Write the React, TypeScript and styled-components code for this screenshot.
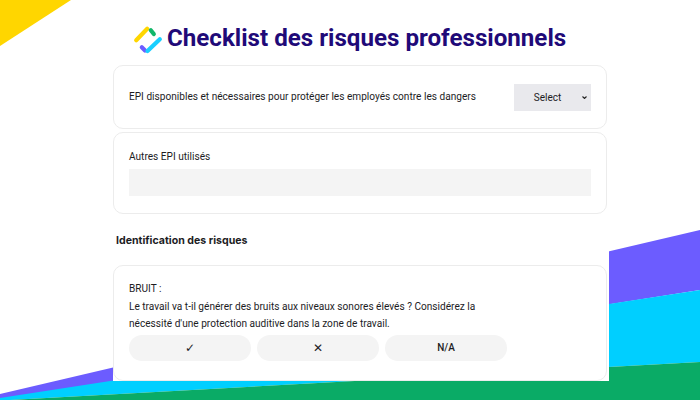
import React from 'react';
import styled, { createGlobalStyle } from 'styled-components';

const GlobalStyle = createGlobalStyle`
  html, body {
    margin: 0;
    padding: 0;
    background: #fff;
    overflow: hidden;
  }
`;

const Page = styled.div`
  position: relative;
  width: 700px;
  height: 400px;
  overflow: hidden;
  font-family: Roboto, Arial, sans-serif;
  color: #1d1d1f;
`;

const Backdrop = styled.svg`
  position: absolute;
  inset: 0;
`;

const Panel = styled.main`
  position: relative;
  box-sizing: border-box;
  width: 496px;
  height: 381px;
  margin-left: 113px;
  padding-right: 2px;
  background: #fff;
  overflow: hidden;
`;

const Header = styled.header`
  display: flex;
  align-items: center;
  gap: 4px;
  height: 65px;
  padding: 10px 0 0 20px;
  box-sizing: border-box;
`;

const Title = styled.h1`
  margin: 0;
  font-size: 24.15px;
  font-weight: 700;
  color: #1f0a78;
  white-space: nowrap;
`;

const Card = styled.section<{ $height: number; $spaced?: boolean }>`
  box-sizing: border-box;
  height: ${p => p.$height}px;
  border: 1px solid #ececec;
  border-radius: 10px;
  background: #fff;
  margin-bottom: ${p => (p.$spaced ? 3 : 0)}px;
`;

const SelectRow = styled(Card)`
  display: flex;
  align-items: center;
  justify-content: space-between;
  padding: 0 15px;
`;

const Label = styled.span`
  font-size: 10.12px;
  line-height: 16px;
`;

const FakeSelect = styled.div`
  position: relative;
  display: flex;
  align-items: center;
  justify-content: center;
  box-sizing: border-box;
  width: 77px;
  height: 27px;
  padding-right: 10px;
  background: #e9e9ed;
  font-size: 10px;
`;

const Chevron = styled.svg`
  position: absolute;
  right: 4px;
  top: 12px;
`;

const FieldCard = styled(Card)`
  padding: 14px 15px 0;
  line-height: 16px;
`;

const TextField = styled.div`
  height: 27px;
  margin-top: 4px;
  background: #f4f4f4;
`;

const SectionTitle = styled.h2`
  margin: 0;
  height: 51px;
  padding: 20px 0 0 3px;
  box-sizing: border-box;
  font-family: Inter, Arial, sans-serif;
  font-size: 10.6px;
  line-height: 14px;
  font-weight: 700;
`;

const QuestionCard = styled(Card)`
  padding: 14px 15px 0;
`;

const Question = styled.p`
  margin: 0;
  width: 360px;
  font-size: 10.12px;
  line-height: 17.5px;
`;

const Answers = styled.div`
  display: flex;
  gap: 6px;
  margin-top: 2px;
`;

const Answer = styled.button<{ $glyph?: boolean }>`
  width: 122px;
  height: 26px;
  padding: 0;
  border: none;
  border-radius: 13px;
  background: #f4f4f4;
  color: #1d1d1f;
  font-family: 'DejaVu Sans', Roboto, Arial, sans-serif;
  font-size: ${p => (p.$glyph ? 12 : 10)}px;
  font-weight: ${p => (p.$glyph ? 400 : 500)};
`;

const TextAnswer = styled(Answer)`
  font-family: Roboto, Arial, sans-serif;
`;

const Logo = () => (
  <svg width="30" height="32" viewBox="0 0 30 32" fill="none" strokeWidth="4.2" strokeLinecap="round">
    <path d="M3.2 18.2 L14.2 6.8" stroke="#ffd600" />
    <path d="M17.8 8.2 L20.8 12" stroke="#12b76a" />
    <path d="M8.8 25.2 L12 28.5" stroke="#6c5cff" />
    <path d="M14.5 29 L26.8 17.2" stroke="#19cfff" />
  </svg>
);

export default function App() {
  return (
    <Page>
      <GlobalStyle />
      <Backdrop width="700" height="400" viewBox="0 0 700 400">
        <polygon points="0,0 71,0 0,46" fill="#ffd600" />
        <polygon points="0,394 700,230 700,290 0,400" fill="#6c5cff" />
        <polygon points="0,398 700,290 700,362 10,400 0,400" fill="#00cfff" />
        <polygon points="10,400 700,362 700,400" fill="#0aab66" />
      </Backdrop>
      <Panel>
        <Header>
          <Logo />
          <Title>Checklist des risques professionnels</Title>
        </Header>
        <SelectRow $height={64} $spaced>
          <Label>EPI disponibles et nécessaires pour protéger les employés contre les dangers</Label>
          <FakeSelect>
            Select
            <Chevron width="5" height="3" viewBox="0 0 5 3" fill="none" stroke="#222" strokeWidth="1.1">
              <path d="M0.5 0.5 L2.5 2.5 L4.5 0.5" />
            </Chevron>
          </FakeSelect>
        </SelectRow>
        <FieldCard $height={82}>
          <Label>Autres EPI utilisés</Label>
          <TextField />
        </FieldCard>
        <SectionTitle>Identification des risques</SectionTitle>
        <QuestionCard $height={116}>
          <Question>
            BRUIT :<br />
            Le travail va t-il générer des bruits aux niveaux sonores élevés ? Considérez la nécessité d'une
            protection auditive dans la zone de travail.
          </Question>
          <Answers>
            <Answer $glyph>✓</Answer>
            <Answer $glyph>✕</Answer>
            <TextAnswer>N/A</TextAnswer>
          </Answers>
        </QuestionCard>
      </Panel>
    </Page>
  );
}
